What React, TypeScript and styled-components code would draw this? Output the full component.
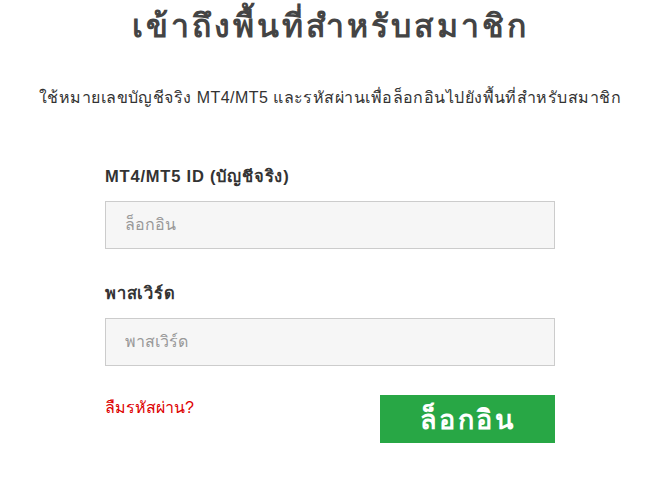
import React from "react";
import styled, { createGlobalStyle } from "styled-components";

const GlobalStyle = createGlobalStyle`
  html, body {
    margin: 0;
    padding: 0;
    background: #ffffff;
  }
  body {
    font-family: "Liberation Sans", Arial, sans-serif;
    color: #333333;
  }
`;

const Page = styled.div`
  width: 646px;
  box-sizing: border-box;
  padding: 6px 0 0 14px;
  display: flex;
  flex-direction: column;
  align-items: center;
`;

const Title = styled.h1`
  margin: 0;
  font-size: 32px;
  font-weight: 700;
  line-height: 40px;
  letter-spacing: 3px;
  color: #444444;
  text-align: center;
`;

const Lead = styled.p`
  margin: 40px 0 0;
  font-size: 16px;
  line-height: 24px;
  letter-spacing: 0.45px;
  color: #333333;
  text-align: center;
  white-space: nowrap;
`;

const Form = styled.form`
  width: 450px;
  margin-top: 55px;
  display: flex;
  flex-direction: column;
`;

const Field = styled.div`
  display: flex;
  flex-direction: column;
  gap: 14px;
  margin-bottom: 33px;
`;

const Label = styled.label`
  font-size: 16.5px;
  font-weight: 700;
  line-height: 22px;
  letter-spacing: 0.8px;
  color: #333333;
`;

const Input = styled.input`
  box-sizing: border-box;
  height: 48px;
  width: 100%;
  padding: 0 19px;
  border: 1px solid #cccccc;
  background: #f6f6f6;
  font-family: inherit;
  font-size: 16px;
  color: #333333;
  outline: none;
  &::placeholder {
    color: #999999;
  }
`;

const Actions = styled.div`
  display: flex;
  justify-content: space-between;
  align-items: flex-start;
  margin-top: -4px;
`;

const Forgot = styled.a`
  font-size: 16px;
  line-height: 24px;
  color: #dd0000;
  text-decoration: none;
  margin-top: 1px;
`;

const Submit = styled.button`
  width: 175px;
  height: 48px;
  border: none;
  background: #28a745;
  color: #ffffff;
  font-family: inherit;
  font-size: 27px;
  font-weight: 700;
  letter-spacing: 2.5px;
  cursor: pointer;
`;

export default function App() {
  return (
    <>
      <GlobalStyle />
      <Page>
        <Title>เข้าถึงพื้นที่สำหรับสมาชิก</Title>
        <Lead>
          ใช้หมายเลขบัญชีจริง MT4/MT5 และรหัสผ่านเพื่อล็อกอินไปยังพื้นที่สำหรับสมาชิก
        </Lead>
        <Form onSubmit={(e) => e.preventDefault()}>
          <Field>
            <Label htmlFor="login">MT4/MT5 ID (บัญชีจริง)</Label>
            <Input id="login" placeholder="ล็อกอิน" />
          </Field>
          <Field>
            <Label htmlFor="pass">พาสเวิร์ด</Label>
            <Input id="pass" type="password" placeholder="พาสเวิร์ด" />
          </Field>
          <Actions>
            <Forgot href="#">ลืมรหัสผ่าน?</Forgot>
            <Submit type="submit">ล็อกอิน</Submit>
          </Actions>
        </Form>
      </Page>
    </>
  );
}
